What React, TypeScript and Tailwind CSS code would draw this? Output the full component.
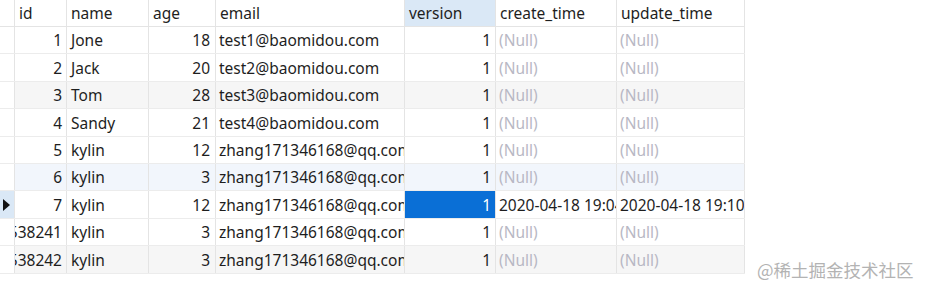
import React from 'react';

type Row = {
  id: string;
  name: string;
  age: string;
  email: string;
  version: string;
  create: string | null;
  update: string | null;
  bg: string;
  current?: boolean;
};

const rows: Row[] = [
  { id: '1', name: 'Jone', age: '18', email: 'test1@baomidou.com', version: '1', create: null, update: null, bg: 'bg-white' },
  { id: '2', name: 'Jack', age: '20', email: 'test2@baomidou.com', version: '1', create: null, update: null, bg: 'bg-white' },
  { id: '3', name: 'Tom', age: '28', email: 'test3@baomidou.com', version: '1', create: null, update: null, bg: 'bg-[#f6f6f6]' },
  { id: '4', name: 'Sandy', age: '21', email: 'test4@baomidou.com', version: '1', create: null, update: null, bg: 'bg-white' },
  { id: '5', name: 'kylin', age: '12', email: 'zhang171346168@qq.com', version: '1', create: null, update: null, bg: 'bg-white' },
  { id: '6', name: 'kylin', age: '3', email: 'zhang171346168@qq.com', version: '1', create: null, update: null, bg: 'bg-[#f2f6fc]' },
  { id: '7', name: 'kylin', age: '12', email: 'zhang171346168@qq.com', version: '1', create: '2020-04-18 19:04:13', update: '2020-04-18 19:10:27', bg: 'bg-white', current: true },
  { id: '1251538241', name: 'kylin', age: '3', email: 'zhang171346168@qq.com', version: '1', create: null, update: null, bg: 'bg-white' },
  { id: '1251538242', name: 'kylin', age: '3', email: 'zhang171346168@qq.com', version: '1', create: null, update: null, bg: 'bg-[#f6f6f6]' },
];

const cell = 'shrink-0 flex items-center pt-[2px] overflow-hidden whitespace-nowrap border-r border-[#e4e4e4]';

function Null() {
  return <span className="text-[#b8b8c4]">(Null)</span>;
}

export default function App() {
  return (
    <div className="relative w-[925px] h-[291px] bg-white overflow-hidden text-[15.5px] text-[#1e1e1e] font-['Noto_Sans','Noto_Sans_CJK_SC',sans-serif] leading-none">
      <div className="w-[745px]">
        <div className="flex h-[27px] border-b border-[#e4e4e4]">
          <div className={`${cell} w-[15px]`} />
          <div className={`${cell} w-[52px] pl-[4px]`}>id</div>
          <div className={`${cell} w-[82px] pl-[4px]`}>name</div>
          <div className={`${cell} w-[67px] pl-[4px]`}>age</div>
          <div className={`${cell} w-[189px] pl-[4px]`}>email</div>
          <div className={`${cell} w-[91px] pl-[4px] bg-[#dae8f6]`}>version</div>
          <div className={`${cell} w-[121px] pl-[4px]`}>create_time</div>
          <div className={`${cell} w-[128px] pl-[4px]`}>update_time</div>
        </div>
        {rows.map((r, i) => (
          <div key={i} className={`flex h-[27.4px] border-b border-[#ececec] ${r.bg}`}>
            <div className={`${cell} w-[15px] ${r.current ? 'bg-[#dae8f6]' : 'bg-white'}`}>
              {r.current && (
                <svg width="8" height="12" viewBox="0 0 8 12" className="ml-[3px] -mt-[2px]">
                  <path d="M0 0 L7 6 L0 12 Z" fill="#111" />
                </svg>
              )}
            </div>
            <div className={`${cell} w-[52px] justify-end pr-[4px]`}>{r.id}</div>
            <div className={`${cell} w-[82px] pl-[4px]`}>{r.name}</div>
            <div className={`${cell} w-[67px] justify-end pr-[5px]`}>{r.age}</div>
            <div className={`${cell} w-[189px] pl-[3px]`}>{r.email}</div>
            <div className={`${cell} w-[91px] justify-end pr-[4px] ${r.current ? 'bg-[#0a6fd6] text-white' : ''}`}>{r.version}</div>
            <div className={`${cell} w-[121px] pl-[3px]`}>{r.create ?? <Null />}</div>
            <div className={`${cell} w-[128px] pl-[3px]`}>{r.update ?? <Null />}</div>
          </div>
        ))}
      </div>
      <div className="absolute left-[757px] top-[261px] text-[17.5px] leading-none text-[#b3b3b3] font-['Noto_Sans_CJK_SC',serif]">
        @稀土掘金技术社区
      </div>
    </div>
  );
}
